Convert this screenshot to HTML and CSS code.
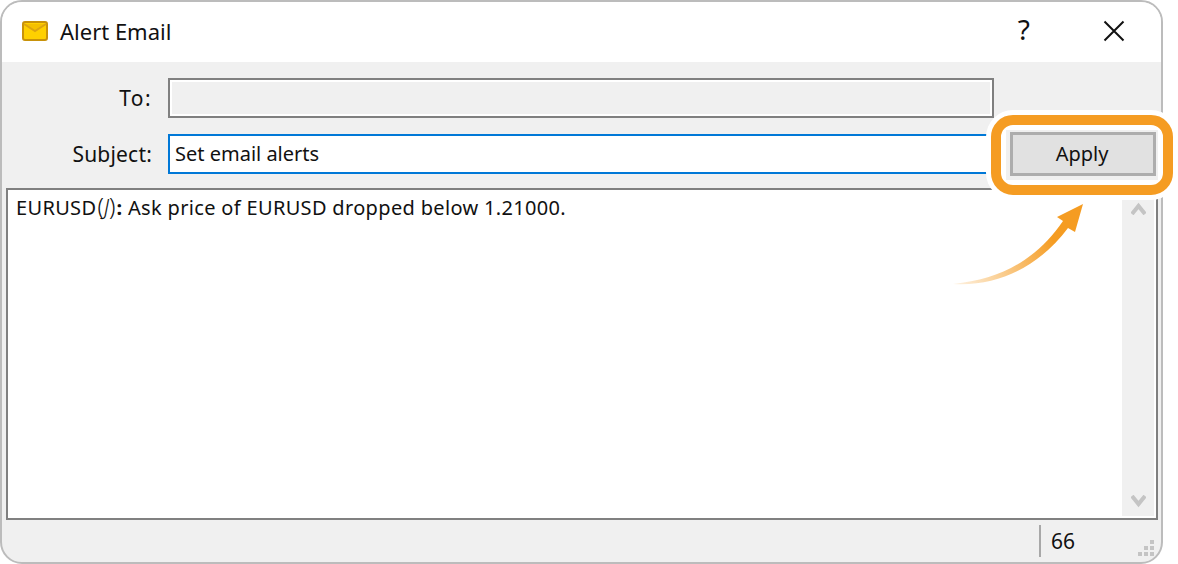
FILE: index.html
```html
<!DOCTYPE html>
<html lang="en">
<head>
<meta charset="utf-8">
<title>Alert Email</title>
<link rel="stylesheet" href="styles.css">
</head>
<body>
<div class="window">
  <header class="titlebar">
    <svg class="mail" width="26" height="20" viewBox="0 0 26 20"><rect x="1" y="1" width="24" height="18" rx="2" fill="#ffd000" stroke="#c8920a" stroke-width="2"/><path d="M2 3 L13 10 L24 3" fill="#f5c000" stroke="#dca410" stroke-width="2"/></svg>
    <span class="title">Alert Email</span>
    <span class="help">?</span>
    <svg class="close" width="22" height="22" viewBox="0 0 22 22"><path d="M1.5 1.5 L20.5 20.5 M20.5 1.5 L1.5 20.5" stroke="#111" stroke-width="2" fill="none"/></svg>
  </header>
  <main class="body">
    <div class="form">
      <div class="row">
        <label class="label label-to">To:</label>
        <div class="field field-to"></div>
      </div>
      <div class="row">
        <label class="label">Subject:</label>
        <div class="field field-subject">Set email alerts</div>
      </div>
    </div>
    <div class="editor">
      <div class="message">EURUSD<span class="sym">(<span class="ital">J</span>)</span><b class="colon">:</b> Ask price of EURUSD dropped below 1.21000.</div>
      <div class="scrollbar">
        <svg width="15" height="13" viewBox="0 0 15 13"><path d="M1 12 L7.5 4 L14 12" fill="none" stroke="#c4c4c4" stroke-width="4"/></svg>
        <svg width="15" height="13" viewBox="0 0 15 13"><path d="M1 1 L7.5 9 L14 1" fill="none" stroke="#c4c4c4" stroke-width="4"/></svg>
      </div>
    </div>
    <footer class="status">
      <div class="count">66</div>
      <svg class="grip" width="16" height="16" viewBox="0 0 16 16"><g fill="#c4c4c4"><rect x="12" y="0" width="4" height="4"/><rect x="6" y="6" width="4" height="4"/><rect x="12" y="6" width="4" height="4"/><rect x="0" y="12" width="4" height="4"/><rect x="6" y="12" width="4" height="4"/><rect x="12" y="12" width="4" height="4"/></g></svg>
    </footer>
  </main>
</div>
<div class="callout"><div class="apply-wrap"><button class="apply">Apply</button></div></div>
<svg class="arrow" width="140" height="90" viewBox="0 0 140 90">
  <defs><linearGradient id="fade" gradientUnits="userSpaceOnUse" x1="7" y1="84" x2="105" y2="35"><stop offset="0" stop-color="#f59c22" stop-opacity="0.12"/><stop offset="1" stop-color="#f59c22"/></linearGradient></defs>
  <path d="M7 84 C55 79 90 60 117 21 L111 17 L137 4 L129 32 L122 28 C95 64 55 87 7 84 Z" fill="url(#fade)"/>
</svg>
</body>
</html>
```
FILE: styles.css
```css
* { box-sizing: border-box; }
html, body { margin: 0; height: 100%; background: #fff; }
body { position: relative; width: 1178px; height: 564px; overflow: hidden; font-family: "Noto Sans", sans-serif; font-size: 20px; color: #111; }
.window { width: 1163px; height: 564px; border: 2px solid #bcbcbc; border-radius: 22px; overflow: hidden; display: flex; flex-direction: column; background: #f0f0f0; }
.titlebar { height: 60px; flex: none; background: #fff; display: flex; align-items: center; padding: 0 36px 2px 20px; }
.mail { flex: none; }
.title { margin-left: 12px; flex: 1; font-size: 22px; }
.help { font-size: 28px; margin-right: 73px; line-height: 1; padding-bottom: 4px; }
.body { flex: 1; display: flex; flex-direction: column; min-height: 0; }
.form { display: flex; flex-direction: column; gap: 16px; padding: 16px 0 0 0; }
.row { display: flex; align-items: center; height: 40px; }
.label { width: 150px; text-align: right; margin-right: 16px; flex: none; font-size: 21px; letter-spacing: 0.2px; }
.label-to { letter-spacing: 1.4px; }
.field { height: 40px; border: 2px solid #808080; padding: 0 5px; line-height: 35px; }
.field-to { width: 826px; background: #f0f0f0; outline: 2px solid #fff; outline-offset: -4px; }
.field-subject { width: 826px; border-color: #0078d7; background: #fff; }
.editor { flex: none; height: 332px; margin: 14px 3px 0 4px; border: 2px solid #808080; background: #fff; display: flex; }
.message { flex: 1; padding: 4px 8px; line-height: 28px; letter-spacing: 0.33px; }
.sym { display: inline-block; font-size: 23px; letter-spacing: 0; margin-left: 1px; line-height: 20px; font-weight: 300; }
.ital { font-style: italic; font-size: 21px; margin: 0; }
.colon { font-weight: 700; margin-left: 1px; }
.scrollbar { width: 32px; margin: 8px 2px 2px 0; background: #f0f0f0; display: flex; flex-direction: column; justify-content: space-between; align-items: center; padding: 4px 0 8px; }
.status { flex: 1; position: relative; display: flex; align-items: center; justify-content: flex-end; padding-right: 122px; }
.count { border-left: 2px solid #a8a8a8; height: 32px; width: 0; white-space: nowrap; padding-left: 10px; line-height: 32px; font-size: 21px; margin-right: -12px; position: relative; }
.grip { position: absolute; right: 7px; bottom: 6px; }
.callout { position: absolute; left: 991px; top: 115px; width: 182px; height: 80px; border: 10px solid #f59c22; border-radius: 22px; background: #fff; box-shadow: 0 0 0 5px #fff; padding: 5px; }
.apply-wrap { background: #f0f0f0; height: 50px; padding: 2px 4px 4px 4px; width: 152px; }
.apply { display: block; width: 146px; height: 44px; margin: 0; background: #e1e1e1; border: 3px solid #adadad; font: inherit; color: #111; padding: 0 2px 2px 0; }
.arrow { position: absolute; left: 946px; top: 200px; }
```
